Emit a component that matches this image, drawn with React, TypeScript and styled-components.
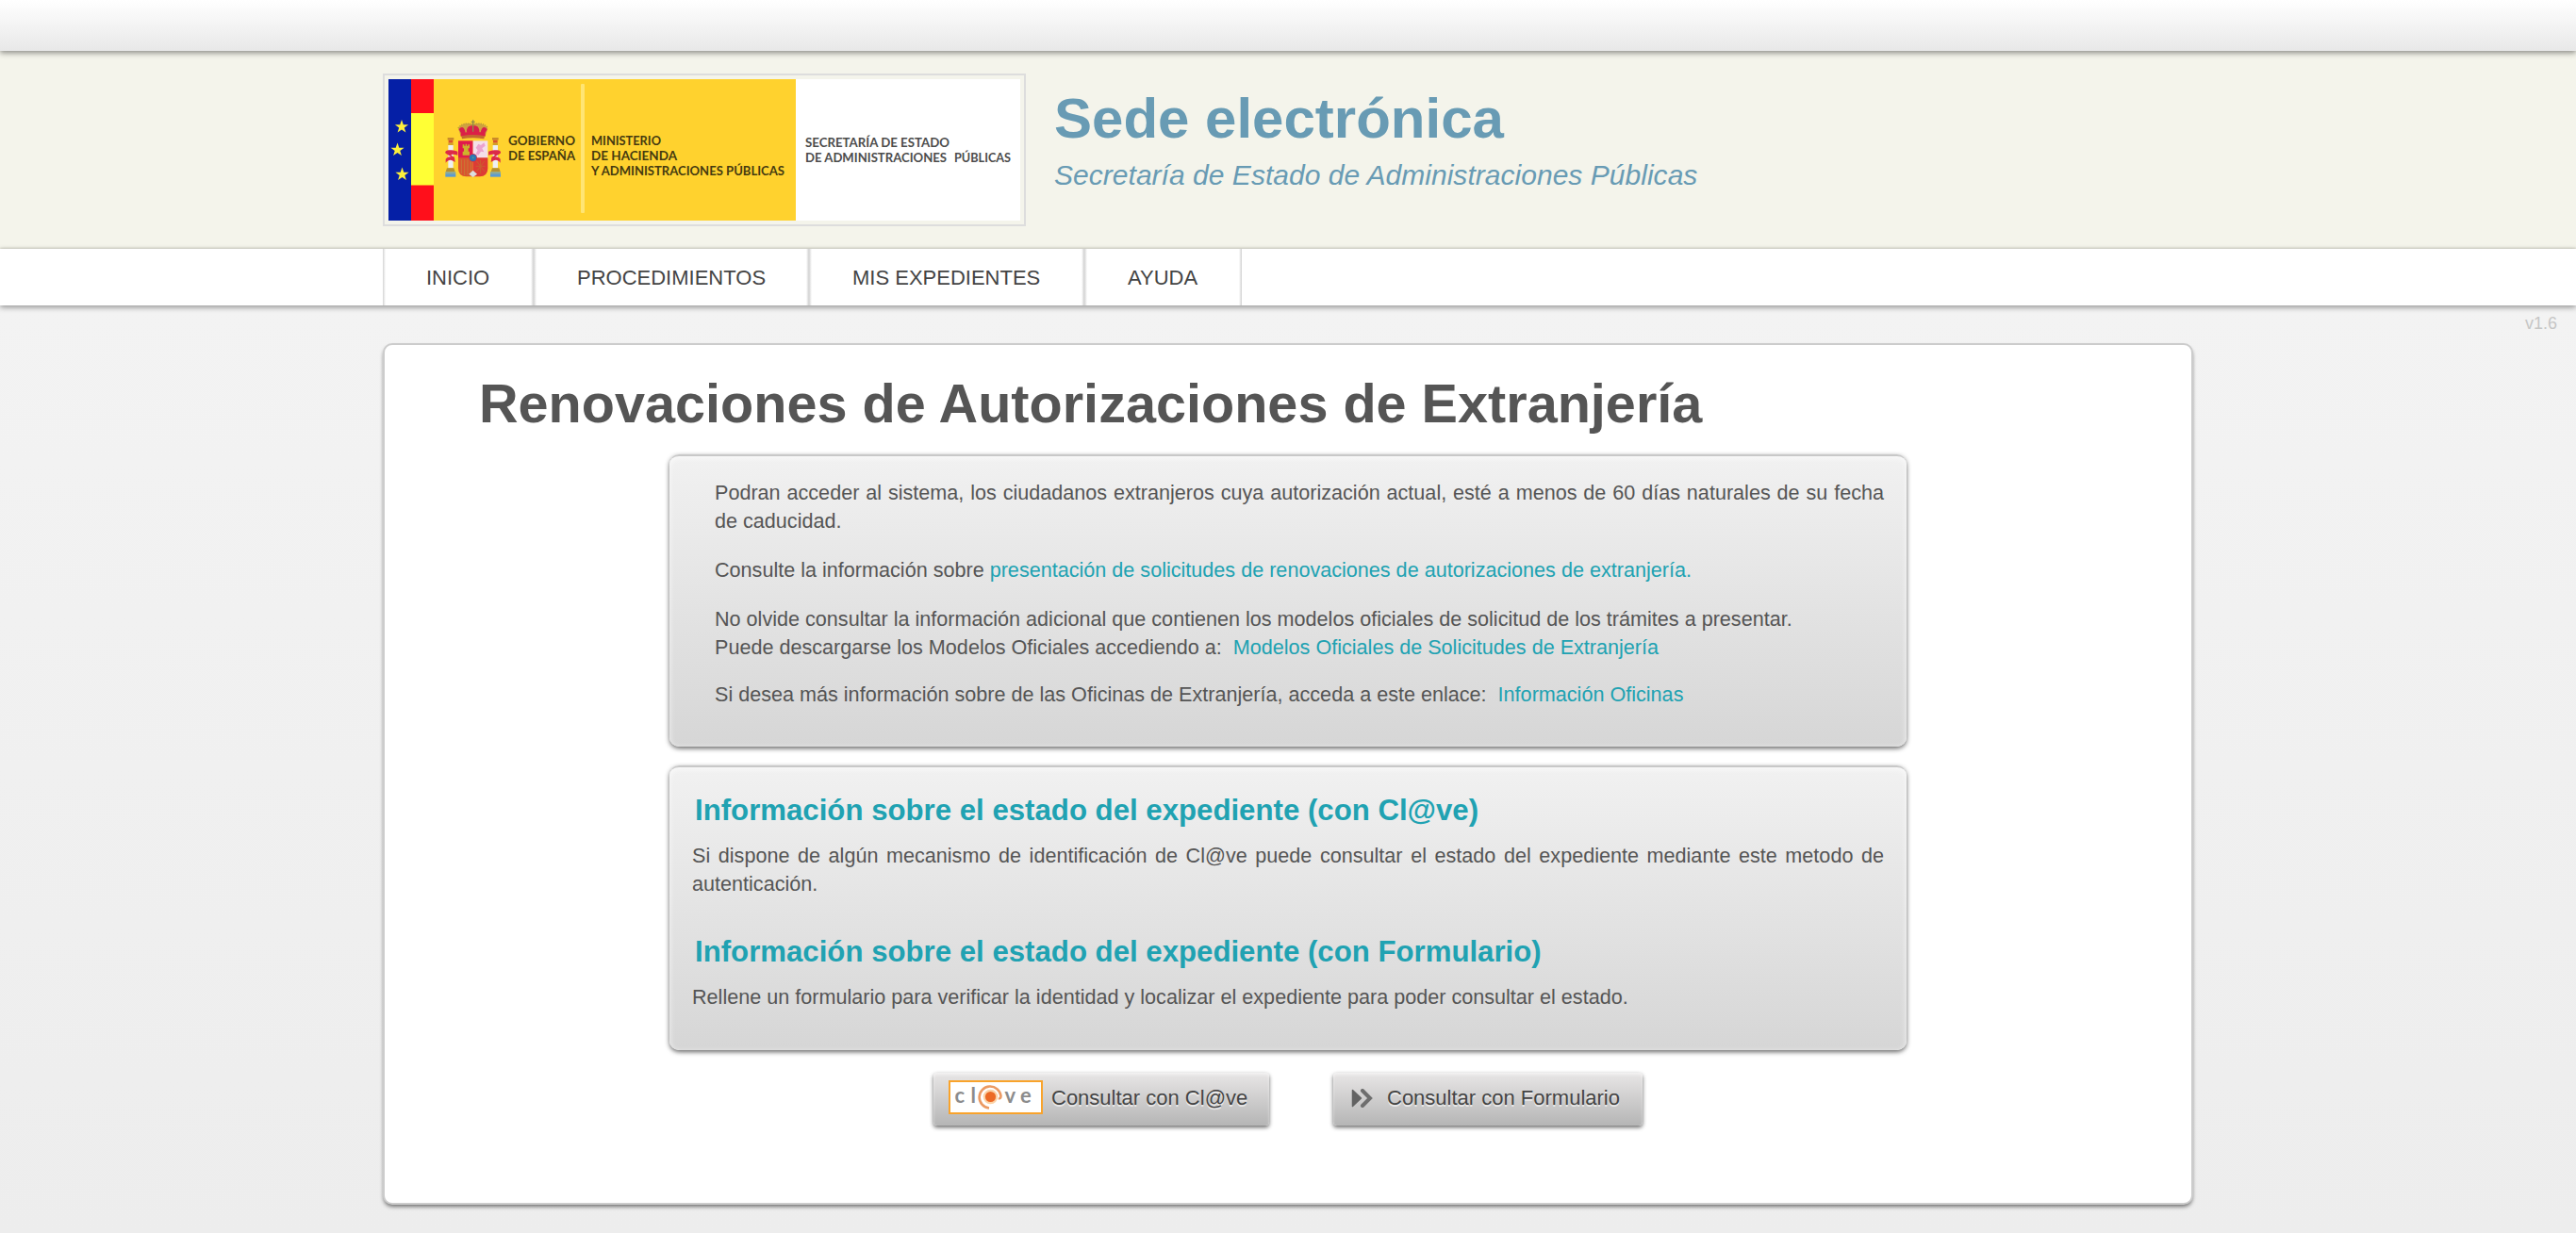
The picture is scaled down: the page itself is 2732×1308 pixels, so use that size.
import React from "react";
import styled, { createGlobalStyle } from "styled-components";

const GlobalStyle = createGlobalStyle`
  html, body { margin: 0; padding: 0; }
  body {
    background: #ededed;
    font-family: "Liberation Sans", Arial, Helvetica, sans-serif;
    font-size: 22px;
    line-height: 30px;
    color: #555;
  }
  * { box-sizing: border-box; }
`;

const Page = styled.div`
  min-height: 1308px;
  background: linear-gradient(#f3f3f3 324px, #ededed);
  overflow: hidden;
`;

const TopBar = styled.div`
  position: relative;
  z-index: 1;
  height: 54px;
  background: linear-gradient(#fff, #e8e8e8);
  box-shadow: 0 2px 6px rgba(0, 0, 0, 0.45);
`;

const Header = styled.header`
  height: 210px;
  padding-top: 24px;
  background: #f4f4eb;
`;

const Container = styled.div`
  width: 1920px;
  margin: 0 auto;
  display: flex;
`;

const LogoFrame = styled.div`
  width: 682px;
  height: 162px;
  padding: 4px;
  border: 2px solid #ddd;
  svg { display: block; }
`;

const Titles = styled.div`
  padding: 16px 0 0 30px;
  color: #689bb4;
`;

const SiteTitle = styled.div`
  font-size: 60px;
  font-weight: bold;
  line-height: 64px;
`;

const SiteSubtitle = styled.div`
  margin-top: 10px;
  font-size: 30px;
  font-style: italic;
  letter-spacing: 0.03px;
  line-height: 36px;
`;

const Nav = styled.nav`
  position: relative;
  height: 60px;
  background: #fff;
  box-shadow: 0 2px 6px rgba(0, 0, 0, 0.4), 0 -1px 2px rgba(70, 70, 40, 0.15);
`;

const NavList = styled.ul`
  width: 1920px;
  margin: 0 auto;
  padding: 0;
  list-style: none;
  display: flex;
`;

const NavItem = styled.li<{ $width: number }>`
  width: ${(p) => p.$width}px;
  height: 60px;
  padding-left: 46px;
  color: #444;
  line-height: 61px;
  background:
    linear-gradient(90deg, #d4d4d4, #fff) left / 3px 100% no-repeat,
    linear-gradient(270deg, #d0d0d0, #fff) right / 3px 100% no-repeat;
`;

const Version = styled.div`
  height: 40px;
  padding: 4px 20px 0 0;
  text-align: right;
  font-size: 18px;
  color: #c6c6c6;
`;

const Panel = styled.main`
  width: 1920px;
  height: 914px;
  margin: 0 auto;
  border: 2px solid #ccc;
  border-radius: 10px;
  background: #fff;
  box-shadow: 0 3px 4px -1px rgba(0, 0, 0, 0.55);
  display: flex;
  flex-direction: column;
  align-items: center;
`;

const PageTitle = styled.h1`
  align-self: flex-start;
  margin: 28px 0 20px 100px;
  font-size: 57.6px;
  line-height: 68px;
`;

const Box = styled.section<{ $height: number; $inset: number; $top: number }>`
  width: 1312px;
  height: ${(p) => p.$height}px;
  margin-bottom: 20px;
  padding: ${(p) => p.$top}px 24px 0 ${(p) => p.$inset}px;
  border-top: 2px solid #c8c8c8;
  border-radius: 10px;
  font-size: 21.6px;
  background: linear-gradient(#f1f1f1, #d6d6d6);
  box-shadow: 0 2px 5px rgba(0, 0, 0, 0.6), inset 0 2px 6px rgba(255, 255, 255, 0.7);
`;

const Text = styled.p<{ $gap?: number }>`
  margin: 0 0 ${(p) => p.$gap ?? 22}px;
  text-align: justify;
`;

const Link = styled.a<{ $spaced?: boolean }>`
  margin-left: ${(p) => (p.$spaced ? 6 : 0)}px;
  color: #20a2b2;
`;

const BoxTitle = styled.h2`
  margin: 0 0 15px 3px;
  font-size: 31.2px;
  line-height: 36px;
  color: #20a2b2;
`;

const Buttons = styled.div`
  display: flex;
  gap: 68px;
  margin-top: 4px;
`;

const Button = styled.button<{ $width: number; $pad: number }>`
  width: ${(p) => p.$width}px;
  height: 56px;
  padding: 0 0 3px ${(p) => p.$pad}px;
  border: 0;
  border-radius: 4px;
  display: flex;
  align-items: center;
  font: inherit;
  white-space: nowrap;
  color: #444;
  text-shadow: 0 2px 0 rgba(255, 255, 255, 0.6);
  background: linear-gradient(#e8e6e6, #b5b5b5);
  box-shadow: 0 2px 4px rgba(0, 0, 0, 0.6), inset 0 2px 3px rgba(255, 255, 255, 0.5);
`;

const Caption = styled.span<{ $gap: number }>`
  margin-left: ${(p) => p.$gap}px;
`;

const ClaveFrame = styled.span`
  width: 100px;
  height: 36px;
  margin-bottom: 1px;
  border: 2px solid #f9a32b;
  background: #fff;
  svg { display: block; }
`;

const star = "0,-7.5 1.8,-2.3 7.1,-2.3 2.8,0.9 4.4,6.1 0,3 -4.4,6.1 -2.8,0.9 -7.1,-2.3 -1.8,-2.3";

function Pillar() {
  return (
    <g>
      <rect x="44" y="108" width="20" height="8" fill="#c98a2a" />
      <rect x="47" y="116" width="14" height="9" fill="#d8552f" />
      <rect x="46" y="125" width="16" height="7" fill="#d3a02c" />
      <rect x="46" y="132" width="16" height="73" fill="#eef0f2" />
      <path d="M38 158 C32 148 50 144 76 152 L76 164 C58 158 46 162 66 170 L68 186 C58 180 50 174 38 188 L38 176 C48 166 56 168 64 174" fill="#dc2b47" />
      <path d="M42 205H64L68 217H38Z" fill="#b6902f" />
      <rect x="37" y="217" width="33" height="8" fill="#7fa6a8" />
      <rect x="37" y="225" width="33" height="8" fill="#5c9bd0" />
    </g>
  );
}

function Crest() {
  return (
    <g transform="translate(48 26) scale(0.33333)">
      <Pillar />
      <g transform="translate(250 0) scale(-1 1)">
        <Pillar />
      </g>
      <path d="M86 103 L78 80 C84 66 104 60 125 64 C146 60 166 66 172 80 L164 103Z" fill="#cfa040" />
      <path d="M88 96 L80 82 C88 70 98 74 101 92Z M105 92 C103 76 112 68 125 70 C138 68 147 76 145 92Z M162 96 L170 82 C162 70 152 74 149 92Z" fill="#d9204a" />
      <path d="M78 78 C86 62 112 60 125 68 C138 60 164 62 172 78" fill="none" stroke="#b99a3a" strokeWidth="4" strokeDasharray="4 3" />
      <path d="M125 52V92M119 58H131" stroke="#8e8a48" strokeWidth="4" />
      <path d="M86 94 Q125 84 164 94 V104 Q125 98 86 104Z" fill="#dc2046" />
      <path d="M88 103 Q125 95 162 103 L160 112 Q125 106 90 112Z" fill="#c5692f" />
      <path d="M78 118H125V175H78Z" fill="#e01a4c" />
      <path d="M125 118H172V175H125Z" fill="#f4dfea" />
      <path d="M78 172H125V232H104Q78 230 78 206Z" fill="#d9542f" />
      <path d="M125 172H172V206Q172 230 146 232H125Z" fill="#dd3b35" />
      <path d="M88 178V222M98 178V228M108 178V228M118 178V222" stroke="#c87a35" strokeWidth="3" />
      <path d="M136 182L162 216M162 182L136 216M134 199H164M149 180V222" stroke="#c9602f" strokeWidth="3" />
      <path d="M92 164V152H96V142H92V130H97V134H101V128H105V134H109V130H114V142H110V152H114V164Z" fill="#cdb32c" />
      <path d="M134 160L140 148L134 140L142 128L150 132L160 124L164 134L154 142L160 154L150 152L142 164Z" fill="#eba3cf" />
      <path d="M112 224L125 212L138 224L125 234Z" fill="#dcdfe0" />
      <circle cx="125" cy="172" r="13" fill="#cf2f4c" />
      <circle cx="125" cy="172" r="11" fill="#2b75b5" />
      <circle cx="125" cy="172" r="3" fill="#4aa08d" />
    </g>
  );
}

const logoText: { x: number; y: number; w: number; t: string; c: string }[] = [
  { x: 127, y: 70, w: 71, t: "GOBIERNO", c: "#453a10" },
  { x: 127, y: 86, w: 71, t: "DE ESPAÑA", c: "#453a10" },
  { x: 215, y: 70, w: 74, t: "MINISTERIO", c: "#453a10" },
  { x: 215, y: 86, w: 91, t: "DE HACIENDA", c: "#453a10" },
  { x: 215, y: 102, w: 205, t: "Y ADMINISTRACIONES PÚBLICAS", c: "#453a10" },
  { x: 442, y: 72, w: 153, t: "SECRETARÍA DE ESTADO", c: "#4c4c4c" },
  { x: 442, y: 88, w: 150, t: "DE ADMINISTRACIONES", c: "#4c4c4c" },
  { x: 600, y: 88, w: 60, t: "PÚBLICAS", c: "#4c4c4c" },
];

function GovernmentLogo() {
  return (
    <svg width="670" height="150" viewBox="0 0 670 150">
      <rect width="670" height="150" fill="#fff" />
      <rect width="432" height="150" fill="#ffd22e" />
      <rect width="24" height="150" fill="#051fa6" />
      <rect x="24" width="24" height="150" fill="#ff0f1b" />
      <rect x="24" y="36" width="24" height="76.5" fill="#ffff35" />
      {[[14, 50.5], [9.5, 75], [14.5, 101]].map(([x, y]) => (
        <polygon key={y} points={star} transform={`translate(${x} ${y})`} fill="#fdf03c" />
      ))}
      <rect x="204" y="5" width="4" height="137" rx="1" fill="#ffe574" />
      <Crest />
      {logoText.map((l) => (
        <text
          key={l.t}
          x={l.x}
          y={l.y}
          textLength={l.w}
          lengthAdjust="spacingAndGlyphs"
          fontFamily="Lato, sans-serif"
          fontSize="13.4"
          fontWeight={700}
          fill={l.c}
        >
          {l.t}
        </text>
      ))}
    </svg>
  );
}

function ClaveLogo() {
  const type = { fontFamily: "Lato, sans-serif", fontSize: 22, fontWeight: 700, fill: "#8c8c8c" };
  return (
    <svg width="96" height="32" viewBox="0 0 96 32">
      <text x="4.5" y="22" {...type}>c</text>
      <text x="21.5" y="22" {...type}>l</text>
      <path d="M41 27.5A11.5 11.5 0 1 1 53.5 14.5Q53.5 18 51 17" fill="none" stroke="#eb9a63" strokeWidth="2.6" />
      <circle cx="42.5" cy="15.5" r="7.8" fill="#fbd3a8" />
      <circle cx="42.5" cy="15.5" r="5.6" fill="#ec6a26" />
      <text x="57.5" y="22" {...type}>v</text>
      <text x="74" y="22" {...type}>e</text>
    </svg>
  );
}

function ForwardIcon() {
  return (
    <svg width="23" height="20" viewBox="0 0 23 20">
      <path d="M1.5 1.5L10.5 10L1.5 18.5Z" fill="#636363" stroke="#636363" strokeWidth="1.5" strokeLinejoin="round" />
      <path d="M12 2L20 10L12 18" fill="none" stroke="#6e6e6e" strokeWidth="4" strokeLinecap="round" />
    </svg>
  );
}

const menu = [
  { label: "INICIO", width: 160 },
  { label: "PROCEDIMIENTOS", width: 292 },
  { label: "MIS EXPEDIENTES", width: 292 },
  { label: "AYUDA", width: 167 },
];

export default function App() {
  return (
    <Page>
      <GlobalStyle />
      <TopBar />
      <Header>
        <Container>
          <LogoFrame>
            <GovernmentLogo />
          </LogoFrame>
          <Titles>
            <SiteTitle>Sede electrónica</SiteTitle>
            <SiteSubtitle>Secretaría de Estado de Administraciones Públicas</SiteSubtitle>
          </Titles>
        </Container>
      </Header>
      <Nav>
        <NavList>
          {menu.map((m) => (
            <NavItem key={m.label} $width={m.width}>{m.label}</NavItem>
          ))}
        </NavList>
      </Nav>
      <Version>v1.6</Version>
      <Panel>
        <PageTitle>Renovaciones de Autorizaciones de Extranjería</PageTitle>
        <Box $height={310} $inset={48} $top={24}>
          <Text>
            Podran acceder al sistema, los ciudadanos extranjeros cuya autorización actual, esté a menos de 60 días
            naturales de su fecha de caducidad.
          </Text>
          <Text>
            Consulte la información sobre{" "}
            <Link>presentación de solicitudes de renovaciones de autorizaciones de extranjería.</Link>
          </Text>
          <Text $gap={20}>
            No olvide consultar la información adicional que contienen los modelos oficiales de solicitud de los
            trámites a presentar.
            <br />
            Puede descargarse los Modelos Oficiales accediendo a:{" "}
            <Link $spaced>Modelos Oficiales de Solicitudes de Extranjería</Link>
          </Text>
          <Text>
            Si desea más información sobre de las Oficinas de Extranjería, acceda a este enlace:{" "}
            <Link $spaced>Información Oficinas</Link>
          </Text>
        </Box>
        <Box $height={302} $inset={24} $top={28}>
          <BoxTitle>Información sobre el estado del expediente (con Cl@ve)</BoxTitle>
          <Text $gap={39}>
            Si dispone de algún mecanismo de identificación de Cl@ve puede consultar el estado del expediente mediante
            este metodo de autenticación.
          </Text>
          <BoxTitle>Información sobre el estado del expediente (con Formulario)</BoxTitle>
          <Text>
            Rellene un formulario para verificar la identidad y localizar el expediente para poder consultar el estado.
          </Text>
        </Box>
        <Buttons>
          <Button $width={356} $pad={16}>
            <ClaveFrame>
              <ClaveLogo />
            </ClaveFrame>
            <Caption $gap={9}>Consultar con Cl@ve</Caption>
          </Button>
          <Button $width={328} $pad={19}>
            <ForwardIcon />
            <Caption $gap={15}>Consultar con Formulario</Caption>
          </Button>
        </Buttons>
      </Panel>
    </Page>
  );
}
